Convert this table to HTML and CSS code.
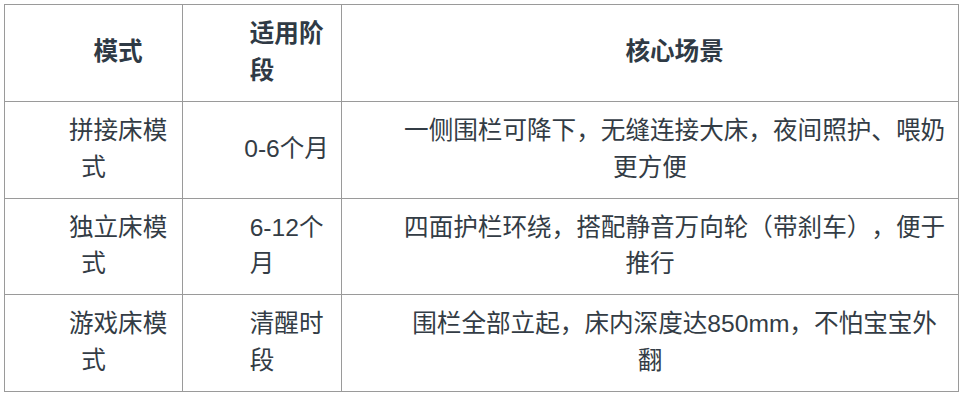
FILE: index.html
```html
<!DOCTYPE html>
<html lang="zh-CN">
<head>
<meta charset="utf-8">
<title>模式</title>
<link rel="stylesheet" href="styles.css">
</head>
<body>
<table class="modes">
  <colgroup>
    <col class="c-mode">
    <col class="c-stage">
    <col class="c-scene">
  </colgroup>
  <thead>
    <tr>
      <th>模式</th>
      <th>适用阶段</th>
      <th>核心场景</th>
    </tr>
  </thead>
  <tbody>
    <tr>
      <td>拼接床模式</td>
      <td>0-6个月</td>
      <td>一侧围栏可降下，无缝连接大床，夜间照护、喂奶更方便</td>
    </tr>
    <tr>
      <td>独立床模式</td>
      <td>6-12个月</td>
      <td>四面护栏环绕，搭配静音万向轮（带刹车），便于推行</td>
    </tr>
    <tr>
      <td>游戏床模式</td>
      <td>清醒时段</td>
      <td>围栏全部立起，床内深度达850mm，不怕宝宝外翻</td>
    </tr>
  </tbody>
</table>
</body>
</html>
```
FILE: styles.css
```css
html, body {
  background: #ffffff;
}
body {
  margin: 4px;
  font-family: "Liberation Sans", "Noto Sans CJK SC", sans-serif;
  color: #333333;
}
.modes {
  border-collapse: collapse;
  table-layout: fixed;
  width: 954px;
  font-size: 24.6px;
  line-height: 1.5;
  text-spacing-trim: space-all;
}
.c-mode { width: 178px; }
.c-stage { width: 159px; }
.c-scene { width: 617px; }
.modes th,
.modes td {
  border: 1px solid #9a9a9a;
  padding: 11px 10px;
  text-align: center;
  text-indent: 2em;
  vertical-align: middle;
  word-break: break-all;
}
.modes th {
  font-weight: bold;
  color: #2f3a45;
}
.modes td {
  font-weight: normal;
  color: #333c45;
}
```
